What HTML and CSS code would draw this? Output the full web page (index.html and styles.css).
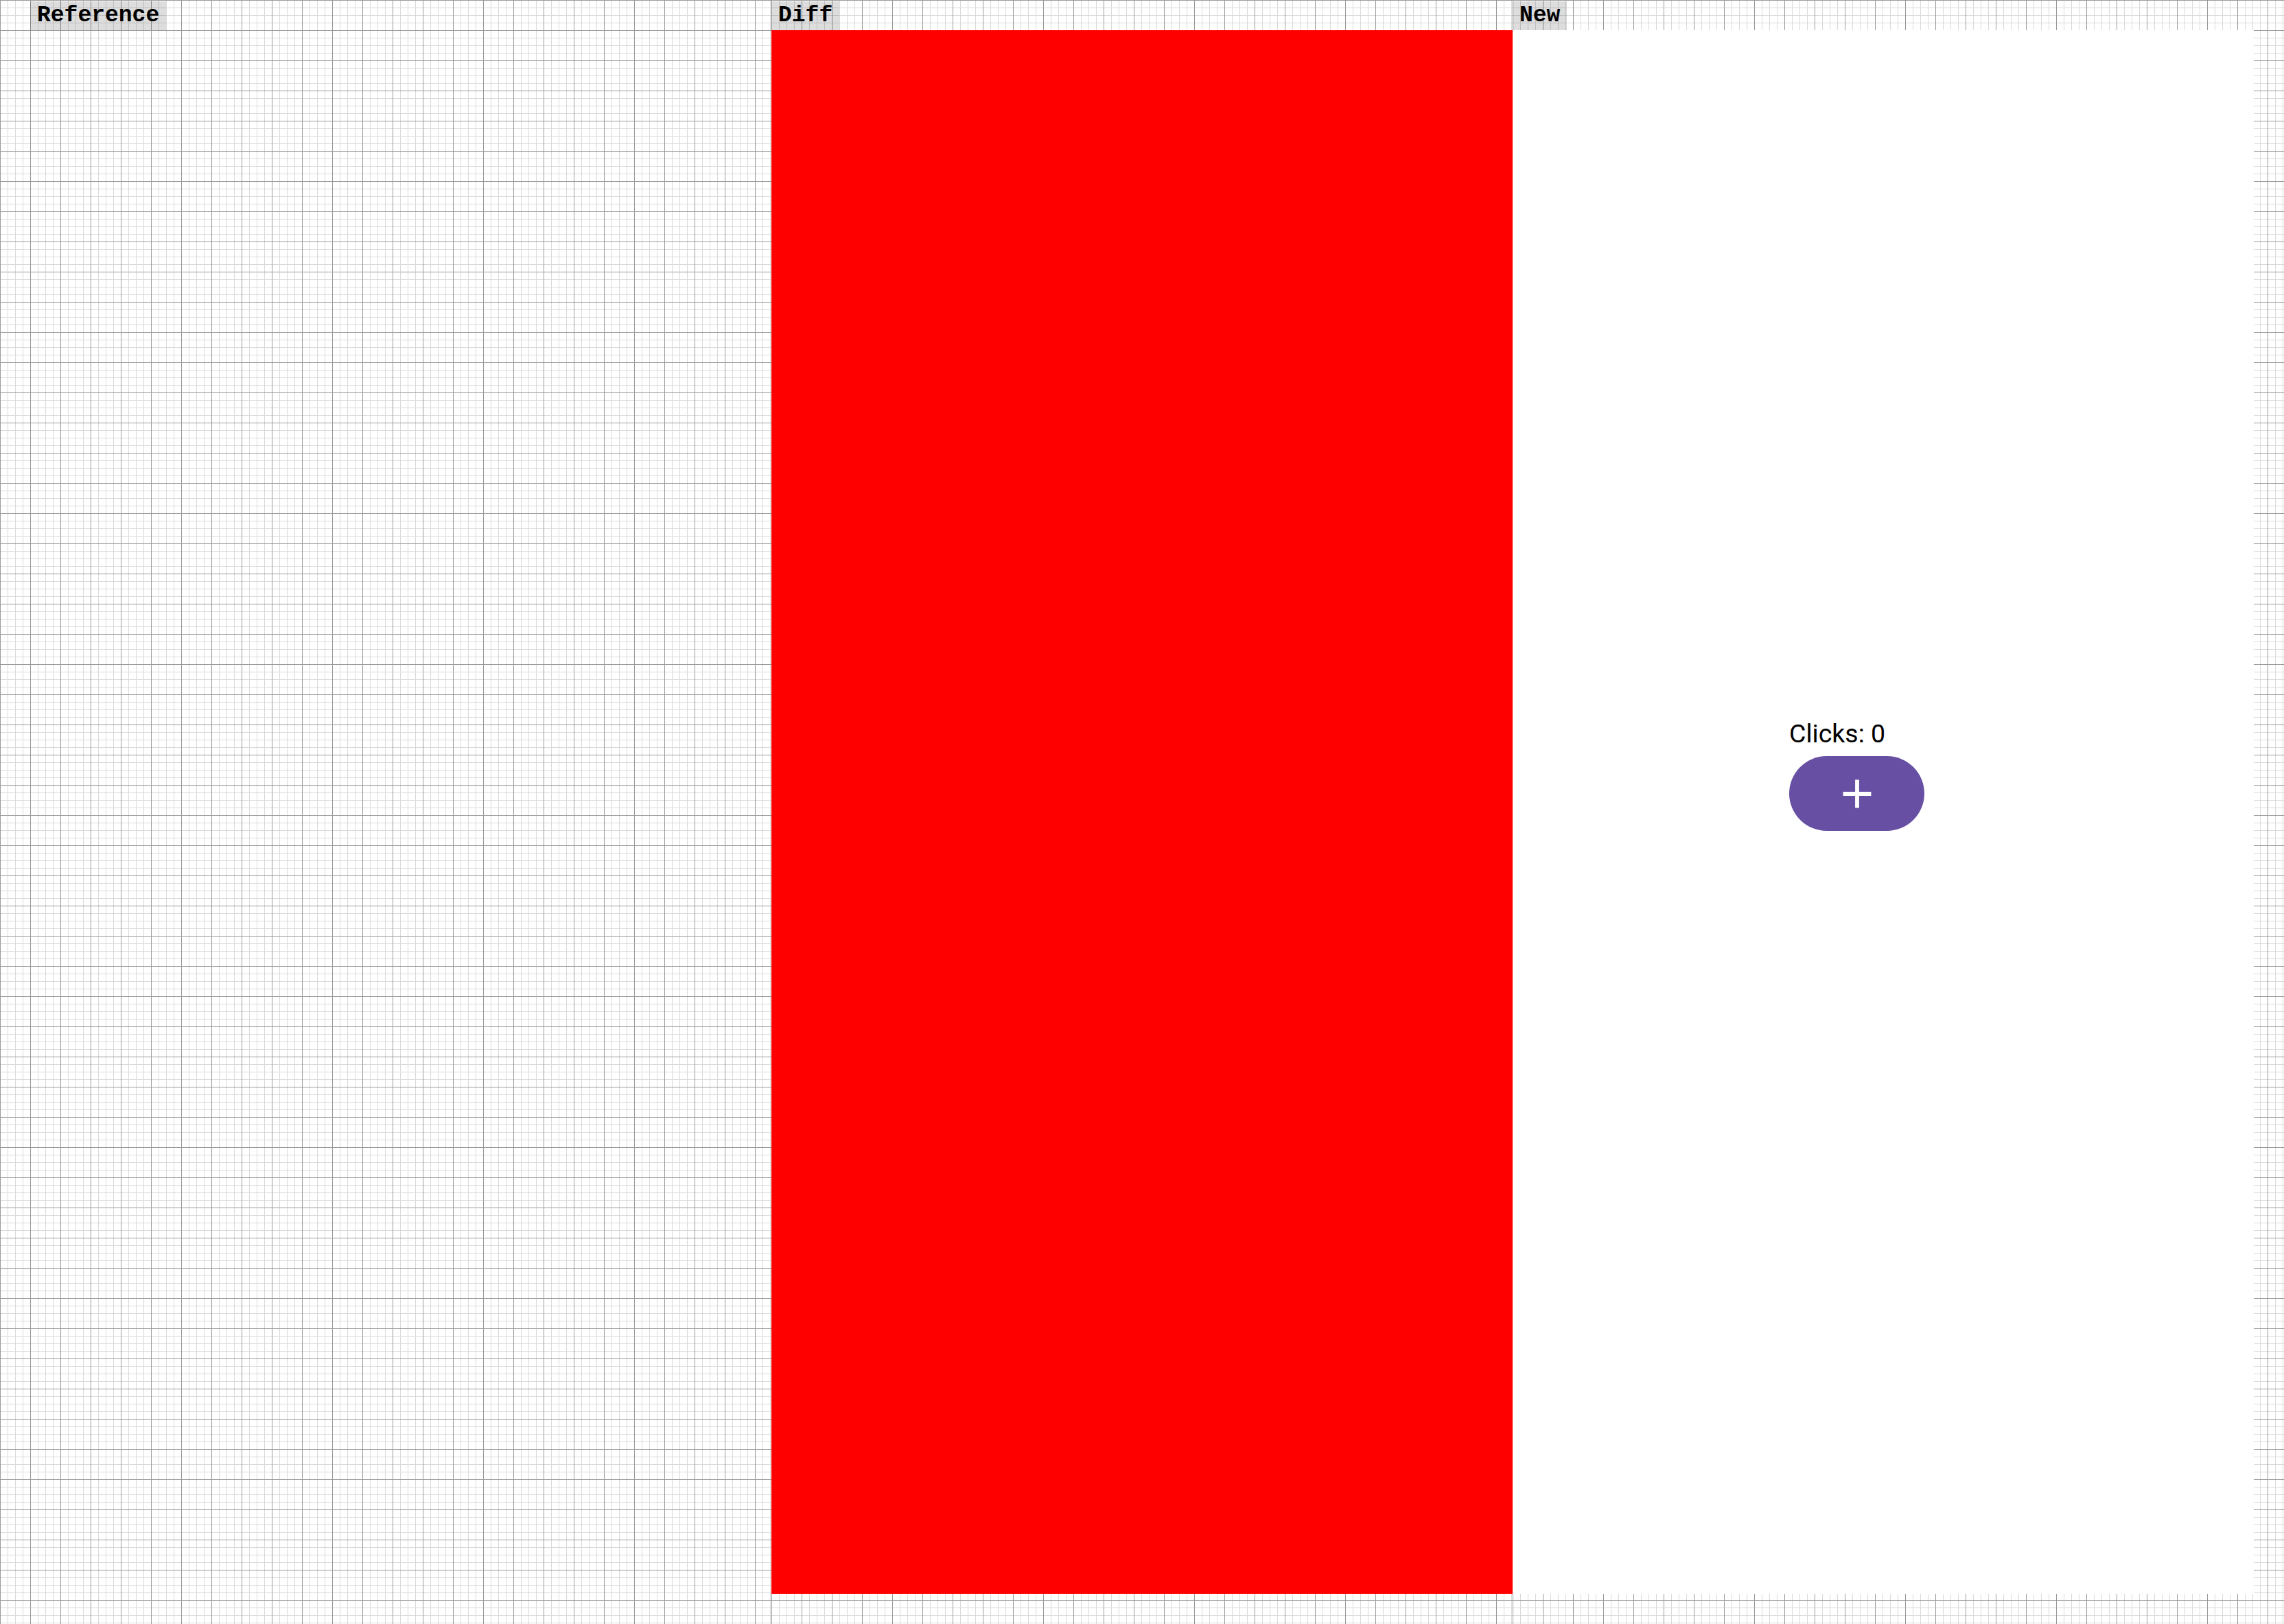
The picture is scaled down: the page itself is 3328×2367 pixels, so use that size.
FILE: index.html
```html
<!DOCTYPE html>
<html lang="en">
<head>
<meta charset="utf-8">
<title>Reference / Diff / New</title>
<link rel="stylesheet" href="styles.css">
</head>
<body>
<div class="board">
  <section class="col col-first grid">
    <div class="label">Reference</div>
    <div class="panel panel-ref"></div>
  </section>
  <section class="col col-mid grid">
    <div class="label">Diff</div>
    <div class="panel panel-diff"></div>
  </section>
  <section class="col col-last grid">
    <div class="label">New</div>
    <div class="panel panel-new">
      <div class="counter">
        <div class="clicks">Clicks: 0</div>
        <button class="add-btn" type="button" aria-label="Add">
          <svg class="add-icon" viewBox="0 0 24 24" width="66" height="66" aria-hidden="true">
            <path d="M19 13h-6v6h-2v-6H5v-2h6V5h2v6h6v2z" fill="#ffffff"/>
          </svg>
        </button>
      </div>
    </div>
  </section>
</div>
</body>
</html>
```

FILE: styles.css
```css
html, body {
  margin: 0;
  padding: 0;
}

body {
  width: 3328px;
  height: 2367px;
  overflow: hidden;
  background: #ffffff;
}

.grid {
  background-color: #ffffff;
  background-image:
    linear-gradient(to right, #9a9a9a 1px, transparent 1px),
    linear-gradient(to bottom, #9a9a9a 1px, transparent 1px),
    linear-gradient(to right, #dadada 1px, transparent 1px),
    linear-gradient(to bottom, #dadada 1px, transparent 1px);
  background-size: 44px 44px, 44px 44px, 11px 11px, 11px 11px;
  background-position: 0 0;
}

.board {
  display: flex;
  flex-direction: row;
  height: 2367px;
}

.col {
  display: flex;
  flex-direction: column;
  align-items: flex-start;
  height: 2367px;
  box-sizing: border-box;
}

.col-first {
  width: 1124px;
  padding-left: 44px;
  flex: none;
}

.col-mid {
  width: 1080px;
  flex: none;
}

.col-last {
  flex: 1;
}

.label {
  margin-top: 2px;
  height: 42px;
  line-height: 42px;
  padding: 0 10px;
  background: rgba(0, 0, 0, 0.135);
  font-family: "Liberation Mono", "Courier New", monospace;
  font-weight: bold;
  font-size: 33px;
  color: #000000;
  white-space: nowrap;
}

.panel {
  width: 1080px;
  height: 2279px;
  flex: none;
  box-sizing: border-box;
}

.panel-ref {
  background: transparent;
}

.panel-diff {
  background: #ff0000;
}

.panel-new {
  background: #ffffff;
  display: flex;
  flex-direction: column;
  align-items: flex-start;
  padding: 1003px 0 0 403px;
}

.counter {
  display: flex;
  flex-direction: column;
  align-items: flex-start;
  gap: 11px;
}

.clicks {
  font-family: Roboto, "Noto Sans", sans-serif;
  font-size: 37.5px;
  line-height: 44px;
  height: 44px;
  color: #000000;
  white-space: nowrap;
}

.add-btn {
  width: 197px;
  height: 109px;
  border: none;
  border-radius: 55px;
  background: #6750a4;
  padding: 0;
  margin: 0;
  display: flex;
  align-items: center;
  justify-content: center;
  cursor: pointer;
}

.add-icon {
  display: block;
  width: 70px;
  height: 70px;
}
```
